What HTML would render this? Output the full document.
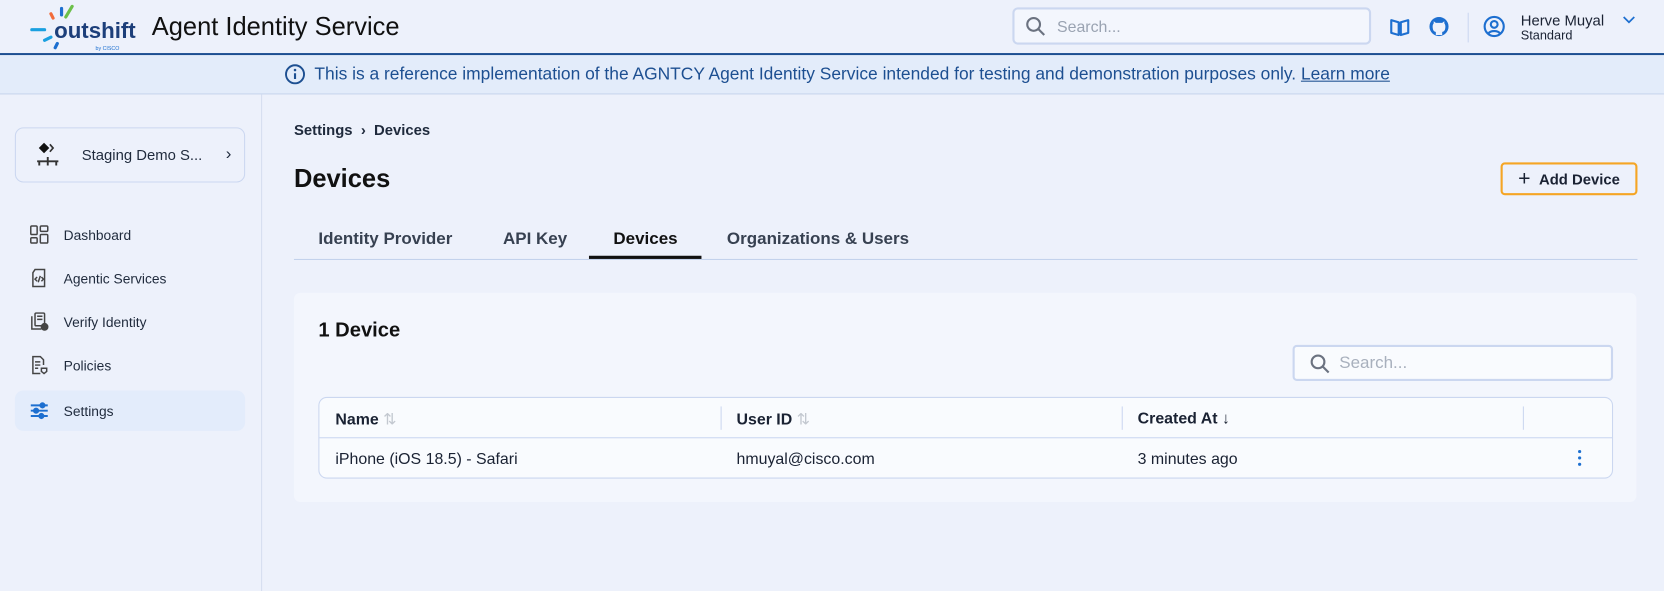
<!DOCTYPE html>
<html><head><meta charset="utf-8"><style>
*{box-sizing:border-box;margin:0;padding:0}
body{width:1664px;height:591px;overflow:hidden;background:#edf1fb;font-family:"Liberation Sans",sans-serif;color:#1a2233;position:relative}
#root{position:absolute;left:0;top:0;width:1568px;height:557px;transform:scale(1.06122);transform-origin:0 0}
.hdr{position:absolute;left:0;top:0;width:1568px;height:52px;background:#edf1fb;border-bottom:2px solid #1d4f91}
.banner{position:absolute;top:52px;left:0;width:1568px;height:37px;background:#e3ecfa;border-bottom:1px solid #c8d6ee;color:#1d4f91;font-size:16.4px;display:flex;align-items:center;justify-content:center;gap:8px;padding-left:10px}
.side{position:absolute;left:0;top:89px;width:247px;height:468px;border-right:1px solid #d6def0}
.org{position:absolute;left:14px;top:31px;width:217px;height:52px;border:1px solid #cbd7f0;border-radius:8px;display:flex;align-items:center;font-size:14px;color:#1f2a3c}
.nav{position:absolute;left:14px;width:217px;height:38px;display:flex;align-items:center;font-size:13px;color:#1f2a3c;border-radius:8px}
.nav svg{margin-left:14px;margin-right:14px}
.tab{position:absolute;font-size:16px;font-weight:bold;color:#374151}
.card{position:absolute;left:277px;top:276px;width:1265px;height:197px;background:#f3f6fd;border-radius:6px}
.tbl{position:absolute;left:300px;top:374px;width:1220px;height:77px;border:1px solid #cbd7f0;border-radius:8px;background:#f9fbfe}
.th{position:absolute;top:11px;font-size:15px;font-weight:bold;color:#1a2233}
.td{position:absolute;top:49px;font-size:15px;color:#1a2233}
.sep{position:absolute;top:8px;width:1px;height:22px;background:#cbd7f0}
</style></head><body><div id="root">
<div class="hdr">
<svg width="140" height="50" style="position:absolute;left:26px;top:2px" viewBox="0 0 140 50">
<line x1="4" y1="26" x2="16" y2="26" stroke="#1aa0e0" stroke-width="3" stroke-linecap="round"/>
<line x1="22" y1="11" x2="24" y2="15" stroke="#f26b3a" stroke-width="3" stroke-linecap="round"/>
<line x1="32" y1="6" x2="32" y2="12" stroke="#1d6fd0" stroke-width="3" stroke-linecap="round"/>
<line x1="42" y1="4" x2="36" y2="14" stroke="#6cc04a" stroke-width="3" stroke-linecap="round"/>
<line x1="16" y1="36" x2="22" y2="33" stroke="#1aa0e0" stroke-width="3" stroke-linecap="round"/>
<line x1="26" y1="43" x2="28" y2="39" stroke="#1d6fd0" stroke-width="3" stroke-linecap="round"/>
<text x="25" y="34" font-family="Liberation Sans" font-weight="bold" font-size="21" fill="#1d3f7a">outshift</text>
<text x="64" y="45" font-family="Liberation Sans" font-size="5" fill="#1d6fd0">by CISCO</text>
</svg>
<div style="position:absolute;left:143px;top:12px;font-size:24px;color:#111">Agent Identity Service</div>
<div style="position:absolute;left:954px;top:7px;width:338px;height:35px;border:2px solid #cbd7f0;border-radius:5px;background:#f3f6fd">
<svg width="20" height="20" style="position:absolute;left:10px;top:6px" viewBox="0 0 20 20"><circle cx="8" cy="8" r="6" fill="none" stroke="#6b7280" stroke-width="2"/><line x1="12.5" y1="12.5" x2="18" y2="18" stroke="#6b7280" stroke-width="2"/></svg>
<span style="position:absolute;left:40px;top:8px;font-size:15px;color:#9aa3b2">Search...</span></div>
<svg width="20" height="20" style="position:absolute;left:1309px;top:15px" viewBox="0 0 20 20"><path d="M2 4 L9 6 L9 18 L2 16Z M18 4 L11 6 L11 18 L18 16Z" fill="none" stroke="#1d6fd0" stroke-width="2" stroke-linejoin="round"/></svg>
<svg width="20" height="20" style="position:absolute;left:1346px;top:15px" viewBox="0 0 20 20"><circle cx="10" cy="10" r="9" fill="#1d6fd0"/><path d="M7 18 v-3 c-2 0 -3 -2 -3 -5 c0 -2 1 -3 1 -3 v-2 l2 1.5 h6 l2 -1.5 v2 c0 0 1 1 1 3 c0 3 -1 5 -3 5 v3" fill="#edf1fb"/></svg>
<div style="position:absolute;left:1383px;top:12px;width:1px;height:28px;background:#cbd7f0"></div>
<svg width="22" height="22" style="position:absolute;left:1397px;top:14px" viewBox="0 0 22 22"><circle cx="11" cy="11" r="9" fill="none" stroke="#1d6fd0" stroke-width="2"/><circle cx="11" cy="9" r="3.2" fill="none" stroke="#1d6fd0" stroke-width="2"/><path d="M5.5 17.5 c2-3 9-3 11 0" fill="none" stroke="#1d6fd0" stroke-width="2"/></svg>
<div style="position:absolute;left:1433px;top:11px;font-size:14px;color:#1a2233">Herve Muyal</div>
<div style="position:absolute;left:1433px;top:26px;font-size:12px;color:#1a2233">Standard</div>
<svg width="12" height="8" style="position:absolute;left:1529px;top:15px" viewBox="0 0 12 8"><path d="M1 1 L6 6 L11 1" fill="none" stroke="#1d6fd0" stroke-width="1.6"/></svg>
</div>
<div class="banner"><svg width="20" height="20" viewBox="0 0 20 20"><circle cx="10" cy="10" r="8.5" fill="none" stroke="#1d4f91" stroke-width="1.8"/><line x1="10" y1="9" x2="10" y2="14.5" stroke="#1d4f91" stroke-width="2"/><circle cx="10" cy="6" r="1.2" fill="#1d4f91"/></svg><span>This is a reference implementation of the AGNTCY Agent Identity Service intended for testing and demonstration purposes only. <u>Learn more</u></span></div>
<div class="side">
<div class="org"><svg width="24" height="24" style="margin:0 20px 0 18px" viewBox="0 0 24 24"><rect x="5" y="2" width="7" height="7" transform="rotate(45 8.5 5.5)" fill="#111"/><path d="M14 2 l3 3.5 l-3 3.5" fill="none" stroke="#333" stroke-width="1.6"/><path d="M2 18 h20 M4 18 v4 M12 14 v8 M20 18 v4" stroke="#333" stroke-width="1.8" fill="none"/></svg>Staging Demo S...<span style="margin-left:auto;margin-right:12px;font-size:16px">›</span></div>
<div class="nav" style="top:113px"><svg width="18" height="18" viewBox="0 0 18 18" fill="none" stroke="#444" stroke-width="1.4"><rect x="1" y="1" width="6" height="8" rx="1"/><rect x="10" y="1" width="7" height="5" rx="1"/><rect x="1" y="12" width="6" height="5" rx="1"/><rect x="10" y="9" width="7" height="8" rx="1"/></svg>Dashboard</div>
<div class="nav" style="top:154px"><svg width="18" height="18" viewBox="0 0 18 18" fill="none" stroke="#444" stroke-width="1.4"><path d="M5 1 h9 v16 h-11 v-13z"/><path d="M7 8 l-2 2 l2 2 M11 8 l2 2 l-2 2 M10 7 l-2 6"/></svg>Agentic Services</div>
<div class="nav" style="top:195px"><svg width="18" height="18" viewBox="0 0 18 18" fill="none" stroke="#444" stroke-width="1.4"><rect x="5" y="1" width="9" height="12" rx="1"/><path d="M2 4 v12 h9 M7 4 h5 M7 7 h5"/><circle cx="14" cy="14" r="3" fill="#444"/></svg>Verify Identity</div>
<div class="nav" style="top:236px"><svg width="18" height="18" viewBox="0 0 18 18" fill="none" stroke="#444" stroke-width="1.4"><path d="M10 17 h-7 v-16 h7 l3 3 v5"/><path d="M5 6 h5 M5 9 h5 M5 12 h3"/><path d="M11 12 h5 v3 l-2.5 2 l-2.5 -2z"/></svg>Policies</div>
<div class="nav" style="top:279px;background:#e3ecfb"><svg width="18" height="18" viewBox="0 0 18 18" stroke="#1d6fd0" stroke-width="1.8"><path d="M1 4 h16 M1 9 h16 M1 14 h16"/><circle cx="12" cy="4" r="2" fill="#1d6fd0"/><circle cx="6" cy="9" r="2" fill="#1d6fd0"/><circle cx="11" cy="14" r="2" fill="#1d6fd0"/></svg>Settings</div>
</div>
<div style="position:absolute;left:277px;top:114px;font-size:14px;font-weight:bold;color:#1f2a3c">Settings &nbsp;›&nbsp; Devices</div>
<div style="position:absolute;left:277px;top:155px;font-size:24px;font-weight:bold;color:#111">Devices</div>
<div style="position:absolute;left:1414px;top:153px;width:129px;height:31px;border:2px solid #f5a524;border-radius:4px;font-size:14px;font-weight:bold;display:flex;align-items:center;justify-content:center;gap:8px"><span style="font-size:20px;font-weight:normal;line-height:1">+</span>Add Device</div>
<div class="tab" style="left:300px;top:217px">Identity Provider</div>
<div class="tab" style="left:474px;top:217px">API Key</div>
<div class="tab" style="left:578px;top:217px;color:#111">Devices</div>
<div class="tab" style="left:685px;top:217px">Organizations &amp; Users</div>
<div style="position:absolute;left:277px;top:244px;width:1266px;height:1px;background:#c3d2ec"></div>
<div style="position:absolute;left:555px;top:241px;width:106px;height:3px;background:#111"></div>
<div class="card"></div>
<div style="position:absolute;left:300px;top:301px;font-size:19px;font-weight:bold;color:#111">1 Device</div>
<div style="position:absolute;left:1218px;top:325px;width:302px;height:34px;border:2px solid #cbd7f0;border-radius:4px;background:#f9fbfe">
<svg width="20" height="20" style="position:absolute;left:14px;top:6px" viewBox="0 0 20 20"><circle cx="8" cy="8" r="6" fill="none" stroke="#6b7280" stroke-width="2"/><line x1="12.5" y1="12.5" x2="18" y2="18" stroke="#6b7280" stroke-width="2"/></svg>
<span style="position:absolute;left:42px;top:7px;font-size:16px;color:#a8b0bd">Search...</span></div>
<div class="tbl">
<div style="position:absolute;left:0;top:37px;width:100%;height:1px;background:#cbd7f0"></div>
<div class="th" style="left:15px">Name <span style="color:#c3c8d0;font-weight:normal">⇅</span></div>
<div class="sep" style="left:378px"></div>
<div class="th" style="left:393px">User ID <span style="color:#c3c8d0;font-weight:normal">⇅</span></div>
<div class="sep" style="left:756px"></div>
<div class="th" style="left:771px">Created At <span style="font-weight:normal">↓</span></div>
<div class="sep" style="left:1134px"></div>
<div class="td" style="left:15px">iPhone (iOS 18.5) - Safari</div>
<div class="td" style="left:393px">hmuyal@cisco.com</div>
<div class="td" style="left:771px">3 minutes ago</div>
<div style="position:absolute;left:1186px;top:49px;width:3px">
<div style="width:3px;height:3px;border-radius:50%;background:#1d6fd0;margin-bottom:3px"></div><div style="width:3px;height:3px;border-radius:50%;background:#1d6fd0;margin-bottom:3px"></div><div style="width:3px;height:3px;border-radius:50%;background:#1d6fd0"></div></div>
</div>
</div></body></html>
